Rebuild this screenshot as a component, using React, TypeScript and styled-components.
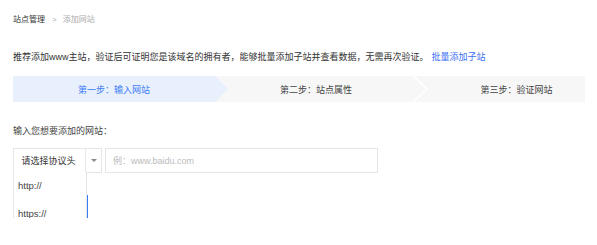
import React from "react";
import styled, { createGlobalStyle } from "styled-components";

const GlobalStyle = createGlobalStyle`
  body {
    margin: 0;
    background: #fff;
    font-family: "Liberation Sans", "Noto Sans CJK SC", sans-serif;
  }
`;

const Page = styled.div`
  padding: 0 12px 0 13px;
  color: #333;
`;

const Breadcrumb = styled.div`
  display: flex;
  align-items: center;
  padding-top: 14px;
  height: 12px;
  line-height: 12px;
  font-size: 8px;
`;

const Crumb = styled.span<{ $current?: boolean }>`
  color: ${(p) => (p.$current ? "#aaa" : "#333")};
`;

const Sep = styled.span`
  margin: 0 6px 0 7px;
  color: #aaa;
  font-size: 8px;
`;

const Desc = styled.p`
  margin: 25px 0 0;
  font-size: 9px;
  line-height: 12px;
  color: #333;
`;

const Link = styled.a`
  margin-left: 3px;
  color: #3a6ff0;
  text-decoration: none;
`;

const Steps = styled.div`
  position: relative;
  display: flex;
  margin-top: 13px;
  height: 26px;
  background: #f7f7f7;
  font-size: 9px;
`;

const Step = styled.div<{ $active?: boolean; $w?: number; $pl?: number; $pr?: number }>`
  display: flex;
  align-items: center;
  justify-content: center;
  box-sizing: border-box;
  flex: ${(p) => (p.$w ? `0 0 ${p.$w}px` : "1")};
  padding-left: ${(p) => p.$pl ?? 0}px;
  padding-right: ${(p) => p.$pr ?? 0}px;
  color: ${(p) => (p.$active ? "#3c7cf5" : "#444")};
  background: ${(p) => (p.$active ? "#e9f0fd" : "transparent")};
  clip-path: ${(p) =>
    p.$active
      ? "polygon(0 0, calc(100% - 13px) 0, 100% 50%, calc(100% - 13px) 100%, 0 100%)"
      : "none"};
`;

const Chevron = styled.svg`
  position: absolute;
  left: 398px;
  top: 0;
`;

const Label = styled.div`
  margin-top: 23px;
  font-size: 9px;
  line-height: 12px;
  color: #444;
`;

const Row = styled.div`
  display: flex;
  margin-top: 11px;
  height: 25px;
`;

const Select = styled.div`
  position: relative;
  display: flex;
  box-sizing: border-box;
  width: 89px;
  height: 25px;
  border: 1px solid #e6e6e6;
`;

const SelectText = styled.div`
  display: flex;
  align-items: center;
  justify-content: center;
  width: 72px;
  padding-right: 2px;
  box-sizing: border-box;
  border-right: 1px solid #e6e6e6;
  font-size: 9px;
  color: #333;
`;

const Arrow = styled.div`
  flex: 1;
  display: flex;
  align-items: center;
  justify-content: center;
  &::after {
    content: "";
    border-left: 3px solid transparent;
    border-right: 3px solid transparent;
    border-top: 3px solid #888;
  }
`;

const Menu = styled.ul`
  position: absolute;
  left: -1px;
  top: 23px;
  z-index: 2;
  box-sizing: border-box;
  width: 74px;
  margin: 0;
  padding: 0;
  list-style: none;
  background: #fff;
  border: 1px solid #e6e6e6;
  border-top: none;
`;

const Option = styled.li`
  height: 28px;
  line-height: 28px;
  padding-left: 4px;
  font-size: 9.5px;
  color: #444;
`;

const Input = styled.input`
  box-sizing: border-box;
  width: 273px;
  height: 25px;
  margin-left: 3px;
  padding: 0 0 0 7px;
  border: 1px solid #e6e6e6;
  font-family: inherit;
  font-size: 9px;
  outline: none;
  &::placeholder {
    color: #bbb;
  }
`;

const Submit = styled.button`
  display: block;
  width: 75px;
  height: 23px;
  margin-top: 22px;
  padding: 0;
  border: none;
  background: #3a7bf7;
  color: #fff;
  font-size: 9px;
`;

export default function App() {
  return (
    <>
      <GlobalStyle />
      <Page>
        <Breadcrumb>
          <Crumb>站点管理</Crumb>
          <Sep>&gt;</Sep>
          <Crumb $current>添加网站</Crumb>
        </Breadcrumb>
        <Desc>
          推荐添加www主站，验证后可证明您是该域名的拥有者，能够批量添加子站并查看数据，无需再次验证。
          <Link href="#">批量添加子站</Link>
        </Desc>
        <Steps>
          <Step $active $w={215} $pr={13}>第一步：输入网站</Step>
          <Step $w={190} $pr={14}>第二步：站点属性</Step>
          <Step $pl={30}>第三步：验证网站</Step>
          <Chevron width="20" height="26" viewBox="0 0 20 26">
            <polyline points="2,0 16,13 2,26" fill="none" stroke="#fff" strokeWidth="1.5" />
          </Chevron>
        </Steps>
        <Label>输入您想要添加的网站：</Label>
        <Row>
          <Select>
            <SelectText>请选择协议头</SelectText>
            <Arrow />
            <Menu>
              <Option>http://</Option>
              <Option>https://</Option>
            </Menu>
          </Select>
          <Input placeholder="例：www.baidu.com" />
        </Row>
        <Submit>添加</Submit>
      </Page>
    </>
  );
}
